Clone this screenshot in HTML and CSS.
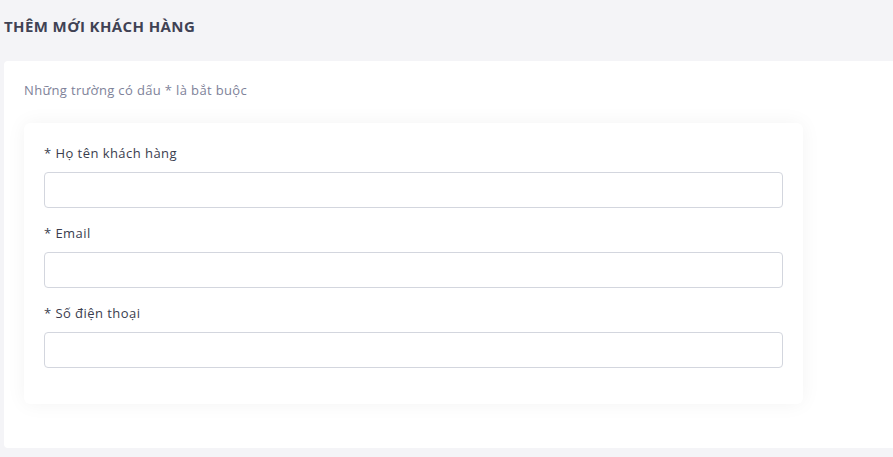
FILE: index.html
```html
<!DOCTYPE html>
<html lang="vi">
<head>
<meta charset="utf-8">
<link rel="stylesheet" href="styles.css">
</head>
<body>
<div class="page">
  <h1 class="title">THÊM MỚI KHÁCH HÀNG</h1>
  <div class="card">
    <p class="note">Những trường có dấu * là bắt buộc</p>
    <div class="form-box">
      <div class="field">
        <label class="label">* Họ tên khách hàng</label>
        <input class="input" type="text">
      </div>
      <div class="field">
        <label class="label">* Email</label>
        <input class="input" type="text">
      </div>
      <div class="field">
        <label class="label">* Số điện thoại</label>
        <input class="input" type="text">
      </div>
    </div>
  </div>
</div>
</body>
</html>
```
FILE: styles.css
```css
html, body {
  margin: 0;
  padding: 0;
  background: #f4f4f7;
  font-family: "Open Sans", "Noto Sans", sans-serif;
}
.page {
  padding: 0 0 9px 4px;
  height: 457px;
  box-sizing: border-box;
  display: flex;
  flex-direction: column;
}
.title {
  margin: 0;
  height: 61px;
  display: flex;
  align-items: center;
  padding-bottom: 9px;
  box-sizing: border-box;
  font-size: 15px;
  font-weight: 700;
  color: #3f4254;
  letter-spacing: 0.4px;
}
.card {
  flex: 1;
  background: #fff;
  border-radius: 4px 0 0 4px;
  padding: 19px 90px 0 20px;
}
.note {
  margin: 0;
  height: 20px;
  line-height: 20px;
  font-size: 13px;
  color: #7e8299;
  letter-spacing: 0.36px;
}
.form-box {
  margin-top: 23px;
  background: #fff;
  border-radius: 6px;
  box-shadow: 0 0 20px rgba(0, 0, 0, 0.05);
  padding: 20px 20px 36px 20px;
}
.field + .field {
  margin-top: 15px;
}
.label {
  display: block;
  height: 20px;
  line-height: 20px;
  font-size: 13px;
  font-weight: 500;
  color: #3a3d4e;
  margin-bottom: 9px;
  letter-spacing: 0.45px;
}
.input {
  display: block;
  width: 100%;
  height: 36px;
  box-sizing: border-box;
  border: 1px solid #d3d6de;
  border-radius: 4px;
  background: #fff;
  margin: 0;
}
```
